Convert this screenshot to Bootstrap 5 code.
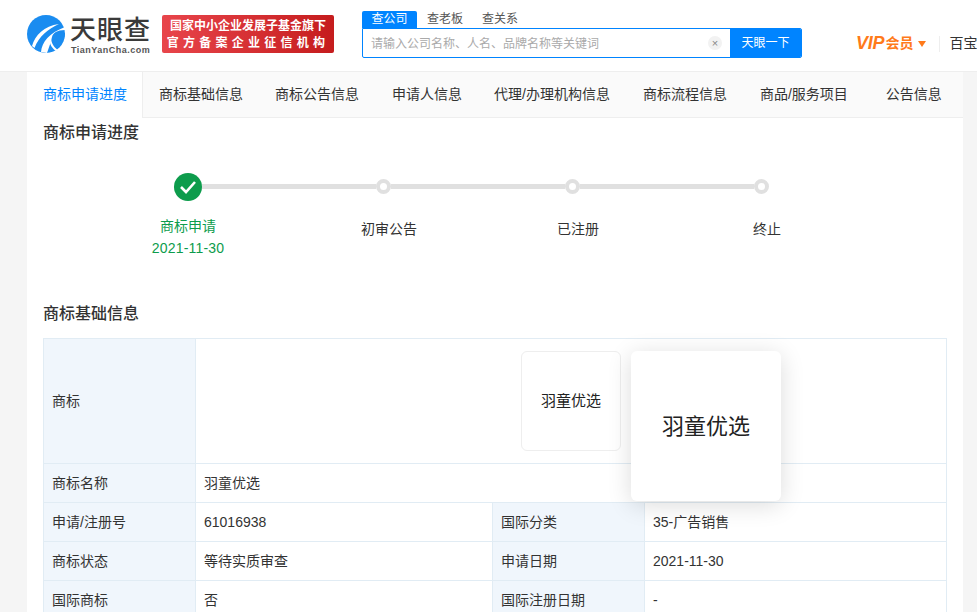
<!DOCTYPE html>
<html lang="zh">
<head>
<meta charset="utf-8">
<title>商标申请进度</title>
<link href="https://cdn.jsdelivr.net/npm/bootstrap@5.3.0/dist/css/bootstrap.min.css" rel="stylesheet">
<style>
html,body{height:612px;overflow:hidden}
body{background:#f5f5f5;color:#333;font:14px/1.5 "Liberation Sans","Noto Sans CJK SC",sans-serif}
.topbar{height:72px;background:#fff;border-bottom:1px solid #eee;padding:15px 0 0 27px;overflow:hidden;white-space:nowrap}
.logo-mark{flex:none}
.logo-word{width:85px;margin-left:5px;color:#3a3a3a;flex:none}
.logo-cn{font-size:26px;line-height:26px;font-weight:500;letter-spacing:1px;margin-top:2px}
.logo-en{font-size:9px;line-height:10px;letter-spacing:.5px;margin-top:2px;font-weight:700;color:#555;padding-left:1px}
.promo{width:172px;height:38px;margin-left:7px;border-radius:2px;background:linear-gradient(90deg,#e8454b,#c51c1d);color:#fff;font-weight:700;font-size:12px;line-height:17px;padding:3px 0 0;text-align:center;flex:none}
.promo-2{letter-spacing:4.25px}
.searchwrap{width:440px;margin:-4px 0 0 28px;flex:none}
.stabs{height:17px;font-size:12px;line-height:17px;color:#555}
.stabs span{padding:0 9.5px}
.stabs .on{background:#0084ff;color:#fff;border-radius:2px 2px 0 0;padding:0 9.5px;width:55px}
.stabs .on + span{padding-left:10px}
.sbox{height:30px;border:1px solid #0084ff;border-radius:0 2px 2px 2px;overflow:hidden}
.sinput{color:#aaa;font-size:12px;padding:1px 0 0 8px;line-height:28px}
.sclear{width:14px;height:14px;border-radius:50%;background:#f2f2f2;color:#888;font-size:11px;line-height:14px;text-align:center;margin-right:8px}
.sbtn{width:71px;background:#0084ff;color:#fff;font-size:12px;line-height:28px;text-align:center}
.vip{margin:-4px 0 0 54px;color:#ff7a1a;font-weight:700;font-size:14px;height:65px;flex:none}
.vip i{font-size:18px;font-weight:700;letter-spacing:-.2px;margin-right:1px}
.tri{border:4.5px solid transparent;border-top:6px solid #ff7a1a;border-bottom:0;margin-left:5px}
.vsep{width:1px;height:16px;background:#eee;margin-left:13px}
.baobox{color:#333;font-weight:400;font-size:14px;margin-left:9px}
.sheet{width:936px;height:540px;margin-left:27px;background:#fff;overflow:hidden}
.tabbar{height:46px;background:#fafafa;border-bottom:1px solid #eee;font-size:14px;line-height:45px;color:#333;white-space:nowrap}
.tabbar span{padding:0 16px}
.tabbar .on{background:#fff;color:#0084ff;border-right:1px solid #eee;height:46px;padding:0 16px;width:116px}
.tabbar .t4{padding-left:17px}
.tabbar .t7{padding-left:17px}
.tabbar .t8{padding-left:17px}
.tabbar .t9{padding-left:22px}
.hd{font-size:16px;font-weight:500;color:#333;line-height:24px;margin:3px 0 0;padding-left:16px}
.track{padding:26px 0 0 147px;height:57px}
.dot-ok{width:28px;height:28px;border-radius:50%;background:#0d9c4c;flex:none}
.dot{width:15px;height:15px;border:4px solid #e0e0e0;border-radius:50%;background:#fff;flex:none}
.bar{width:174px;height:5px;background:#e0e0e0;flex:none}
.labels{padding-left:66.5px;height:50px;margin-top:13px;text-align:center;line-height:22px;color:#333}
.labels>div{width:189px}
.labels>div:first-child{color:#0d9c4c}
.stepdate{letter-spacing:.2px}
.labels>div+div{padding-top:3px}
.labels>div:nth-child(2){margin-left:12px}
.hd2{margin-top:37px}
.tablewrap{margin:12px 16px 0;position:relative}
.info{table-layout:fixed;width:904px;margin:0;border-color:#e1ecf4;color:#333;font-size:14px}
.info td{padding:0 8px;height:39px;vertical-align:middle;border:1px solid #e1ecf4;color:#333}
.info td.lab{background:#f0f6fc}
.info tr.big td{height:125px}
.thumbs{padding-left:317px}
.thumb{width:100px;height:100px;border:1px solid #eee;border-radius:6px;font-size:15px;color:#222;line-height:98px;text-align:center}
.pop{position:absolute;left:588px;top:13px;width:150px;height:150px;border-radius:6px;background:#fff;box-shadow:0 4px 24px rgba(0,0,0,.14);font-size:22px;color:#222;line-height:152px;text-align:center}
</style>
</head>
<body>
<header class="topbar d-flex">
  <svg width="38" height="38" viewBox="0 0 38 38" class="logo-mark" role="img" aria-label="天眼查">
    <circle cx="19" cy="19" r="19" fill="#1a8cf0"/>
    <path d="M5 31C8 20 17 11 32 9 21 14 12 21 7.500 33Z" fill="#fff"/>
    <path d="M14 37C15 27 22 18 38 12L38 15C30 15 26 18 25 22 24 27 22 32 20 38Z" fill="#fff"/>
    <path d="M24 24C25 30 28 33 31 35L29 36C26 34 23 30 23 27Z" fill="#fff"/>
    <path d="M28 22C30 18 34 17 38 18L37.500 22C35 21 31 21 28 22Z" fill="#1a8cf0"/>
  </svg>
  <div class="logo-word">
    <div class="logo-cn">天眼查</div>
    <div class="logo-en">TianYanCha.com</div>
  </div>
  <div class="promo">
    <div>国家中小企业发展子基金旗下</div>
    <div class="promo-2">官方备案企业征信机构</div>
  </div>
  <div class="searchwrap">
    <div class="stabs"><span class="on d-inline-block">查公司</span><span>查老板</span><span>查关系</span></div>
    <div class="sbox d-flex align-items-center">
      <div class="sinput flex-grow-1">请输入公司名称、人名、品牌名称等关键词</div>
      <div class="sclear">×</div>
      <div class="sbtn">天眼一下</div>
    </div>
  </div>
  <div class="vip d-flex align-items-center align-self-start">
    <i>VIP</i><span>会员</span><span class="tri"></span><span class="vsep"></span><span class="baobox">百宝</span>
  </div>
</header>
<main class="sheet">
  <nav class="tabbar d-flex">
    <span class="on">商标申请进度</span>
    <span>商标基础信息</span>
    <span>商标公告信息</span>
    <span class="t4">申请人信息</span>
    <span>代理/办理机构信息</span>
    <span class="t7">商标流程信息</span>
    <span class="t8">商品/服务项目</span>
    <span class="t9">公告信息</span>
  </nav>
  <h2 class="hd">商标申请进度</h2>
  <div class="track d-flex align-items-center">
    <span class="dot-ok d-flex align-items-center justify-content-center">
      <svg width="18" height="14" viewBox="0 0 18 14"><path d="M2 7l5 5 9-10" fill="none" stroke="#fff" stroke-width="2.6"/></svg>
    </span>
    <span class="bar"></span><span class="dot"></span>
    <span class="bar"></span><span class="dot"></span>
    <span class="bar"></span><span class="dot"></span>
  </div>
  <div class="labels d-flex">
    <div><div>商标申请</div><div class="stepdate">2021-11-30</div></div>
    <div>初审公告</div>
    <div>已注册</div>
    <div>终止</div>
  </div>
  <h2 class="hd hd2">商标基础信息</h2>
  <div class="tablewrap">
    <table class="table info">
      <colgroup><col style="width:152px"><col style="width:297px"><col style="width:152px"><col></colgroup>
      <tbody>
        <tr class="big"><td class="lab">商标</td><td colspan="3"><div class="thumbs"><div class="thumb">羽童优选</div></div></td></tr>
        <tr><td class="lab">商标名称</td><td colspan="3">羽童优选</td></tr>
        <tr><td class="lab">申请/注册号</td><td>61016938</td><td class="lab">国际分类</td><td>35-广告销售</td></tr>
        <tr><td class="lab">商标状态</td><td>等待实质审查</td><td class="lab">申请日期</td><td>2021-11-30</td></tr>
        <tr><td class="lab">国际商标</td><td>否</td><td class="lab">国际注册日期</td><td>-</td></tr>
      </tbody>
    </table>
    <div class="pop">羽童优选</div>
  </div>
</main>
<script src="https://cdn.jsdelivr.net/npm/bootstrap@5.3.0/dist/js/bootstrap.bundle.min.js"></script>
</body>
</html>
